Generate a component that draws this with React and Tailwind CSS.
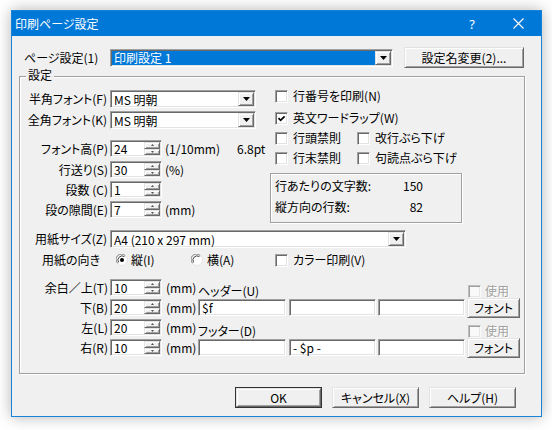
import React from "react";

const sunken =
  "bg-white border border-t-[#a0a0a0] border-l-[#a0a0a0] border-b-white border-r-white shadow-[inset_1px_1px_0_#696969,inset_-1px_-1px_0_#e3e3e3]";
const raised =
  "bg-[#f0f0f0] border border-t-[#e3e3e3] border-l-[#e3e3e3] border-b-[#696969] border-r-[#696969] shadow-[inset_1px_1px_0_#ffffff,inset_-1px_-1px_0_#a0a0a0]";
const etched =
  "border border-[#a0a0a0] shadow-[1px_1px_0_#ffffff,inset_1px_1px_0_#ffffff]";

function DownTri() {
  return (
    <svg width="7" height="4" viewBox="0 0 7 4">
      <polygon points="0,0 7,0 3.5,4" fill="#000" />
    </svg>
  );
}

function Combo({ className, text, selected }) {
  return (
    <div className={sunken + " h-[18px] p-[1px] flex " + className}>
      <div
        className={
          "flex-1 flex items-center pl-[2px] whitespace-nowrap leading-[13px] " +
          (selected ? "bg-[#0078d7] text-white" : "")
        }
      >
        {text}
      </div>
      <div className={raised + " w-[16px] h-full flex items-center justify-center"}>
        <DownTri />
      </div>
    </div>
  );
}

function SmallTri({ up }) {
  return (
    <svg width="3" height="2" viewBox="0 0 3 2">
      <polygon points={up ? "0,2 3,2 1.5,0" : "0,0 3,0 1.5,2"} fill="#555" />
    </svg>
  );
}

function Spin({ value }) {
  return (
    <div className={sunken + " w-[52px] h-[17px] p-[1px] flex shrink-0"}>
      <div className="flex-1 flex items-center pl-[2px] leading-[13px]">{value}</div>
      <div className="w-[16px] flex flex-col">
        <div className={raised + " flex-1 flex items-center justify-center"}>
          <SmallTri up />
        </div>
        <div className={raised + " flex-1 flex items-center justify-center"}>
          <SmallTri />
        </div>
      </div>
    </div>
  );
}

function Check({ checked, disabled }) {
  return (
    <div
      className={
        sunken +
        " w-[13px] h-[13px] shrink-0 flex items-center justify-center " +
        (disabled ? "opacity-60" : "")
      }
    >
      {checked && (
        <svg width="9" height="9" viewBox="0 0 9 9">
          <path d="M1.5 4.2 L3.6 6.3 L7.6 2.3" stroke="#000" strokeWidth="1.7" fill="none" />
        </svg>
      )}
    </div>
  );
}

function Radio({ selected }) {
  return (
    <svg width="12" height="12" viewBox="0 0 12 12" className="shrink-0">
      <circle cx="6" cy="6" r="5.5" fill="#fff" stroke="#e3e3e3" />
      <path d="M1.6 9.2 A5.2 5.2 0 0 1 9.2 1.6" stroke="#808080" fill="none" />
      <path d="M2.6 8.4 A4.2 4.2 0 0 1 8.4 2.6" stroke="#404040" fill="none" />
      {selected && <circle cx="6" cy="6" r="2" fill="#000" />}
    </svg>
  );
}

function CheckItem({ label, checked, className }) {
  return (
    <div className={"flex items-center " + (className || "")}>
      <Check checked={checked} />
      <span className="ml-[5px] whitespace-nowrap">{label}</span>
    </div>
  );
}

function Button({ children, className, isDefault }) {
  const inner = (
    <div className={raised + " w-full h-full flex items-center justify-center whitespace-nowrap"}>
      {children}
    </div>
  );
  if (isDefault) {
    return <div className={"border border-[#333] " + className}>{inner}</div>;
  }
  return <div className={className}>{inner}</div>;
}

function SpinRow({ label, value, extra, className }) {
  return (
    <div className={"flex h-[17px] items-center " + (className || "")}>
      <div className="w-[90px] pr-[2px] text-right whitespace-nowrap">{label}</div>
      <Spin value={value} />
      {extra}
    </div>
  );
}

function TextBox({ className, value }) {
  return (
    <div className={sunken + " h-[17px] pl-[3px] flex items-center leading-[13px] " + className}>
      {value}
    </div>
  );
}

function UseCheck() {
  return (
    <div className="flex items-center w-[52px] text-[#a0a0a0] [text-shadow:1px_1px_0_#fff]">
      <Check disabled />
      <span className="ml-[4px]">使用</span>
    </div>
  );
}

export default function App() {
  return (
    <div className="w-[552px] h-[430px] bg-white pt-[10px] pl-[11px] overflow-hidden [font-family:'Noto_Sans_CJK_JP',sans-serif] text-[12px] leading-[14px] text-black [font-feature-settings:'palt']">
      <div className="w-[531px] h-[407px] border border-[#1883d7] bg-[#f0f0f0] shadow-[0_0_14px_rgba(0,0,0,0.3)] flex flex-col">
        {/* Title bar */}
        <div className="h-[25px] bg-[#0078d7] flex items-center text-white shrink-0">
          <div className="pl-[3px] text-[12px]">印刷ページ設定</div>
          <div className="ml-auto flex h-full">
            <div className="w-[46px] h-full flex items-center justify-center text-[13px] [font-family:'Noto_Sans',sans-serif]">
              ?
            </div>
            <div className="w-[46px] h-full flex items-center justify-center">
              <svg width="11" height="11" viewBox="0 0 11 11">
                <path d="M0.5 0.5 L10.5 10.5 M10.5 0.5 L0.5 10.5" stroke="#fff" strokeWidth="1.1" />
              </svg>
            </div>
          </div>
        </div>

        {/* Body */}
        <div className="flex flex-col pt-[11px]">
          <div className="flex items-center h-[21px] pl-[12px]">
            <div className="w-[86px] whitespace-nowrap">ページ設定(1)</div>
            <Combo className="w-[283px]" text="印刷設定 1" selected />
            <Button className="ml-[11px] w-[120px] h-[21px]">設定名変更(2)...</Button>
          </div>

          {/* Group box */}
          <div className={etched + " relative mt-[8px] ml-[7px] w-[506px] h-[298px] flex flex-col"}>
            <div className="absolute -top-[9px] left-[6px] px-[2px] bg-[#f0f0f0]">設定</div>

            <div className="mt-[10px] flex">
              {/* left column */}
              <div className="w-[255px] pt-[3px] flex flex-col">
                <div className="flex h-[18px] items-center">
                  <div className="w-[90px] pr-[3px] text-right whitespace-nowrap">半角フォント(F)</div>
                  <Combo className="w-[146px]" text="MS 明朝" />
                </div>
                <div className="flex h-[18px] items-center mt-[3px]">
                  <div className="w-[90px] pr-[3px] text-right whitespace-nowrap">全角フォント(K)</div>
                  <Combo className="w-[146px]" text="MS 明朝" />
                </div>
                <SpinRow
                  className="mt-[11px]"
                  label="フォント高(P)"
                  value="24"
                  extra={
                    <>
                      <span className="ml-[3px] w-[72px] whitespace-nowrap">(1/10mm)</span>
                      <span>6.8pt</span>
                    </>
                  }
                />
                <SpinRow
                  className="mt-[4px]"
                  label="行送り(S)"
                  value="30"
                  extra={<span className="ml-[3px]">(%)</span>}
                />
                <SpinRow className="mt-[3px]" label="段数 (C)" value="1" />
                <SpinRow
                  className="mt-[3px]"
                  label="段の隙間(E)"
                  value="7"
                  extra={<span className="ml-[3px]">(mm)</span>}
                />
              </div>

              {/* right column */}
              <div className="flex flex-col">
                <CheckItem className="h-[18px]" label="行番号を印刷(N)" />
                <CheckItem className="h-[18px] mt-[4px]" label="英文ワードラップ(W)" checked />
                <div className="flex h-[18px] mt-[2px] items-center">
                  <CheckItem className="w-[82px]" label="行頭禁則" />
                  <CheckItem label="改行ぶら下げ" />
                </div>
                <div className="flex h-[18px] mt-[2px] items-center">
                  <CheckItem className="w-[82px]" label="行末禁則" />
                  <CheckItem label="句読点ぶら下げ" />
                </div>
                <div className={etched + " mt-[6px] -ml-[5px] w-[192px] h-[50px] pl-[4px] pt-[5px] flex flex-col"}>
                  <div className="flex">
                    <span className="w-[120px] whitespace-nowrap">行あたりの文字数:</span>
                    <span className="w-[28px] text-right">150</span>
                  </div>
                  <div className="flex mt-[7px]">
                    <span className="w-[120px] whitespace-nowrap">縦方向の行数:</span>
                    <span className="w-[28px] text-right">82</span>
                  </div>
                </div>
              </div>
            </div>

            {/* paper size */}
            <div className="mt-[7px] flex h-[18px] items-center">
              <div className="w-[90px] pr-[3px] text-right whitespace-nowrap">用紙サイズ(Z)</div>
              <Combo className="w-[296px]" text="A4 (210 x 297 mm)" />
            </div>

            {/* orientation */}
            <div className="mt-[3px] flex h-[18px] items-center">
              <div className="w-[90px] pr-[10px] text-right whitespace-nowrap">用紙の向き</div>
              <div className="ml-[6px] w-[75px] flex items-center">
                <Radio selected />
                <span className="ml-[3px]">縦(I)</span>
              </div>
              <div className="w-[84px] flex items-center">
                <Radio />
                <span className="ml-[4px]">横(A)</span>
              </div>
              <CheckItem label="カラー印刷(V)" />
            </div>

            {/* margins + header/footer */}
            <div className="mt-[10px] flex flex-col gap-[3px]">
              <div className="flex h-[17px] items-center">
                <div className="w-[90px] pr-[2px] text-right whitespace-nowrap">余白／上(T)</div>
                <Spin value="10" />
                <span className="ml-[4px] w-[32px]">(mm)</span>
                <div className="w-[322px] h-full flex items-end">
                  <span className="mb-[-2px]">ヘッダー(U)</span>
                  <div className="ml-auto mb-[-2px]">
                    <UseCheck />
                  </div>
                </div>
              </div>
              <div className="flex h-[17px] items-center">
                <div className="w-[90px] pr-[2px] text-right whitespace-nowrap">下(B)</div>
                <Spin value="20" />
                <span className="ml-[4px] w-[32px]">(mm)</span>
                <div className="w-[322px] h-full flex items-center">
                  <TextBox className="w-[88px]" value="$f" />
                  <TextBox className="ml-[3px] w-[87px]" value="" />
                  <TextBox className="ml-[2px] w-[87px]" value="" />
                  <Button className="ml-[2px] w-[53px] h-[20px] shrink-0">フォント</Button>
                </div>
              </div>
              <div className="flex h-[17px] items-center">
                <div className="w-[90px] pr-[2px] text-right whitespace-nowrap">左(L)</div>
                <Spin value="20" />
                <span className="ml-[4px] w-[32px]">(mm)</span>
                <div className="w-[322px] h-full flex items-end">
                  <span className="mb-[-2px]">フッター(D)</span>
                  <div className="ml-auto mb-[-2px]">
                    <UseCheck />
                  </div>
                </div>
              </div>
              <div className="flex h-[17px] items-center">
                <div className="w-[90px] pr-[2px] text-right whitespace-nowrap">右(R)</div>
                <Spin value="10" />
                <span className="ml-[4px] w-[32px]">(mm)</span>
                <div className="w-[322px] h-full flex items-center">
                  <TextBox className="w-[88px]" value="" />
                  <TextBox className="ml-[3px] w-[87px]" value="- $p -" />
                  <TextBox className="ml-[2px] w-[87px]" value="" />
                  <Button className="ml-[2px] w-[53px] h-[20px] shrink-0">フォント</Button>
                </div>
              </div>
            </div>
          </div>

          {/* Bottom buttons */}
          <div className="mt-[13px] flex justify-end pr-[25px] gap-[10px]">
            <Button isDefault className="w-[87px] h-[21px]">OK</Button>
            <Button className="w-[87px] h-[21px]">キャンセル(X)</Button>
            <Button className="w-[87px] h-[21px]">ヘルプ(H)</Button>
          </div>
        </div>
      </div>
    </div>
  );
}
